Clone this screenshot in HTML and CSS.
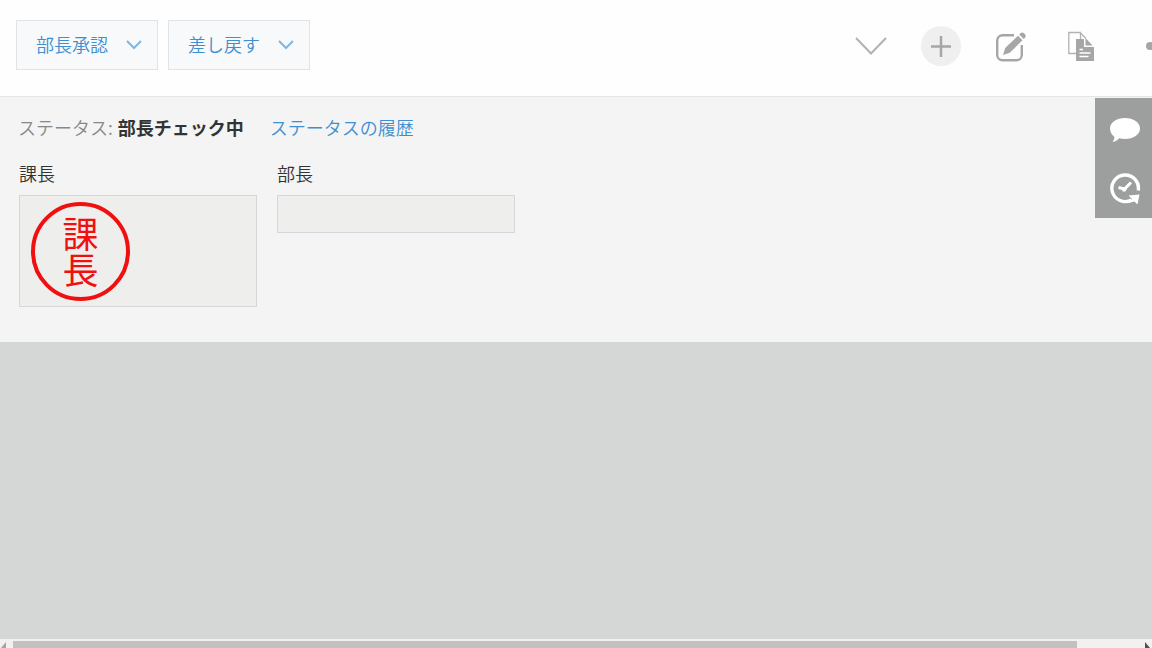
FILE: index.html
```html
<!DOCTYPE html>
<html lang="ja">
<head>
  <meta charset="UTF-8" />
  <meta name="viewport" content="width=device-width, initial-scale=1.0"/>
  <title>部長チェック中</title>
  <link rel="stylesheet" href="styles.css">
</head>
<body>
  <header class="toolbar">
    <div class="actions">
      <button type="button" class="action-btn">
        部長承認
        <svg width="16" height="10" viewBox="0 0 16 10"><path d="M1 1l7 7 7-7"/></svg>
      </button>
      <button type="button" class="action-btn">
        差し戻す
        <svg width="16" height="10" viewBox="0 0 16 10"><path d="M1 1l7 7 7-7"/></svg>
      </button>
    </div>
    <div class="tools">
      <button type="button" class="tool-btn" aria-label="次のレコード">
        <svg width="40" height="40" viewBox="0 0 40 40"><path class="line" d="M5 12l15 15.500 15-15.500"/></svg>
      </button>
      <button type="button" class="tool-btn round" aria-label="追加">
        <svg width="40" height="40" viewBox="0 0 40 40"><path class="plus" d="M20 10v21M10 20.500h20"/></svg>
      </button>
      <button type="button" class="tool-btn" aria-label="編集">
        <svg width="40" height="40" viewBox="0 0 40 40">
          <path class="frame" d="M23 9.200H11.500a5.300 5.300 0 0 0-5.300 5.300v14.500a5.300 5.300 0 0 0 5.300 5.300h14a5.300 5.300 0 0 0 5.300-5.300V19"/>
          <path class="fill" d="M12 29l2.200-7L27 9.700l4.500 4.500-12.700 12.500z"/>
          <path class="fill" d="M28.200 8.500l1.500-1.500q1.500-1.200 3 0l1.500 1.500q1.200 1.500 0 3l-1.500 1.500z"/>
        </svg>
      </button>
      <button type="button" class="tool-btn" aria-label="複製">
        <svg width="40" height="40" viewBox="0 0 40 40">
          <path class="thin" d="M15 27.500H7.800V6.500H19.500v6.500M19 6.500l6 6"/>
          <path class="fill" d="M24.500 12l7 7.500h-7z"/>
          <path class="fill" d="M15 13h8v8h10v14H15z"/>
          <path class="rows" d="M18.500 23.500h3.500M18.500 27h11M18.500 30.500h9"/>
        </svg>
      </button>
      <button type="button" class="tool-btn" aria-label="その他">
        <svg width="40" height="40" viewBox="0 0 40 40">
          <circle class="fill" cx="19" cy="20" r="4"/>
          <circle class="fill" cx="30" cy="20" r="4"/>
        </svg>
      </button>
    </div>
  </header>

  <main class="record">
    <div class="status">
      <span class="status-label">ステータス:</span>
      <strong>部長チェック中</strong>
      <a href="#">ステータスの履歴</a>
    </div>
    <div class="fields">
      <div class="field">
        <div class="field-label">課長</div>
        <div class="field-value">
          <div class="stamp">課長</div>
        </div>
      </div>
      <div class="field">
        <div class="field-label">部長</div>
        <div class="field-value"></div>
      </div>
    </div>
    <!-- comment / history tabs -->
    <div class="side-tabs">
      <button type="button" aria-label="コメント">
        <svg width="32" height="32" viewBox="0 0 32 32">
          <path d="M16 6c8.400 0 15 4.500 15 10.500S24.400 27 16 27c-2 0-4-.3-5.800-.8-1.700 2-3.700 3.200-6.700 3.800 1.500-2 2-3.600 1.800-5.300C2.600 22.500 1 19.600 1 16.500 1 10.500 7.600 6 16 6z"/>
        </svg>
      </button>
      <button type="button" aria-label="変更履歴">
        <svg width="32" height="32" viewBox="0 0 32 32">
          <path class="ring" d="M29.300 18.500A13.300 13.300 0 1 0 22.500 28"/>
          <path class="hand" d="M9.500 15.500l6 1.500 6.500-6.500"/>
          <path d="M13 16l3-1 2 1.500-1.500 3h-3z"/>
          <path d="M19.500 23.500l11-1-2 10-3-3-6 1.500 3.500-4z"/>
        </svg>
      </button>
    </div>
  </main>

  <div class="scrollbar">
    <svg class="arrow-left" width="6" height="7" viewBox="0 0 6 7"><path d="M6 1v6H1z"/></svg>
    <div class="thumb"></div>
    <svg class="arrow-right" width="5" height="7" viewBox="0 0 5 7"><path d="M0 1l5 6H0z"/></svg>
  </div>
</body>
</html>
```
FILE: styles.css
```css
* { box-sizing: border-box; }
body {
  margin: 0;
  min-height: 100vh;
  display: flex;
  flex-direction: column;
  background: #d4d7d6;
  color: #333;
  font-family: "Noto Sans CJK JP", sans-serif;
  font-size: 18px;
  font-weight: 350;
  line-height: 24px;
}
button {
  margin: 0;
  padding: 0;
  border: none;
  background: none;
  font: inherit;
  cursor: pointer;
}
svg {
  display: block;
  fill: none;
}
.toolbar {
  display: flex;
  justify-content: space-between;
  padding: 20px 0 26px 16px;
  background: #fefefe;
  border-bottom: 1px solid #e3e5e6;
  overflow: hidden;
}
.actions {
  display: flex;
  gap: 10px;
}
.action-btn {
  display: flex;
  align-items: center;
  justify-content: space-between;
  width: 142px;
  height: 50px;
  padding: 0 15px 2px 19px;
  border: 1px solid #e0e4e6;
  background: #f7f9fa;
  color: #3e8fd0;
  white-space: nowrap;
}
.action-btn svg {
  margin-top: 2px;
  stroke: #7fb6e2;
  stroke-width: 2;
}
.tools {
  display: flex;
  gap: 30px;
  padding-top: 6px;
  margin-right: -19px;
}
.tool-btn {
  width: 40px;
  height: 40px;
}
.round {
  border-radius: 50%;
  background: #efefef;
}
.fill { fill: #a6a6a6; }
.line { stroke: #b2b2b2; stroke-width: 2; }
.plus { stroke: #a6a6a6; stroke-width: 2.5; }
.frame { stroke: #a6a6a6; stroke-width: 2.4; }
.thin { stroke: #b2b2b2; stroke-width: 1.3; }
.rows { stroke: #fff; stroke-width: 1.4; }

.record {
  position: relative;
  padding: 18px 18px 35px;
  background: #f4f4f4;
}
.status { display: flex; }
.status-label {
  margin-right: 5px;
  color: #888;
}
.status strong {
  margin-right: 26px;
  font-weight: 700;
}
a {
  color: #3e8fd0;
  text-decoration: none;
}
.fields {
  display: flex;
  align-items: flex-start;
  gap: 20px;
  margin-top: 22px;
  padding-left: 1px;
}
.field { width: 238px; }
.field-label { margin-bottom: 10px; }
.field-value {
  min-height: 38px;
  padding: 6px 11px 5px;
  border: 1px solid #d5d8da;
  background: #eeeeed;
}
.stamp {
  display: flex;
  align-items: center;
  justify-content: center;
  width: 99px;
  height: 99px;
  border: 4px solid #f01010;
  border-radius: 50%;
  color: #f01010;
  font-size: 36px;
  font-weight: 400;
  line-height: 36px;
  writing-mode: vertical-rl;
}
.side-tabs {
  position: absolute;
  top: 1px;
  right: 0;
  background: #9d9f9e;
}
.side-tabs button {
  display: flex;
  align-items: center;
  justify-content: center;
  width: 57px;
  height: 60px;
  padding-left: 3px;
}
.side-tabs svg { fill: #fff; }
.side-tabs .ring {
  fill: none;
  stroke: #fff;
  stroke-width: 3.4;
}
.side-tabs .hand {
  fill: none;
  stroke: #fff;
  stroke-width: 3;
}
.scrollbar {
  display: flex;
  align-items: flex-end;
  gap: 7px;
  height: 9px;
  margin-top: auto;
  padding-right: 2px;
  background: #f1f1f1;
}
.thumb {
  width: 92.5%;
  height: 7px;
  background: #c1c1c1;
}
.arrow-left { fill: #a3a3a3; }
.arrow-right {
  margin-left: auto;
  fill: #505050;
}
```
